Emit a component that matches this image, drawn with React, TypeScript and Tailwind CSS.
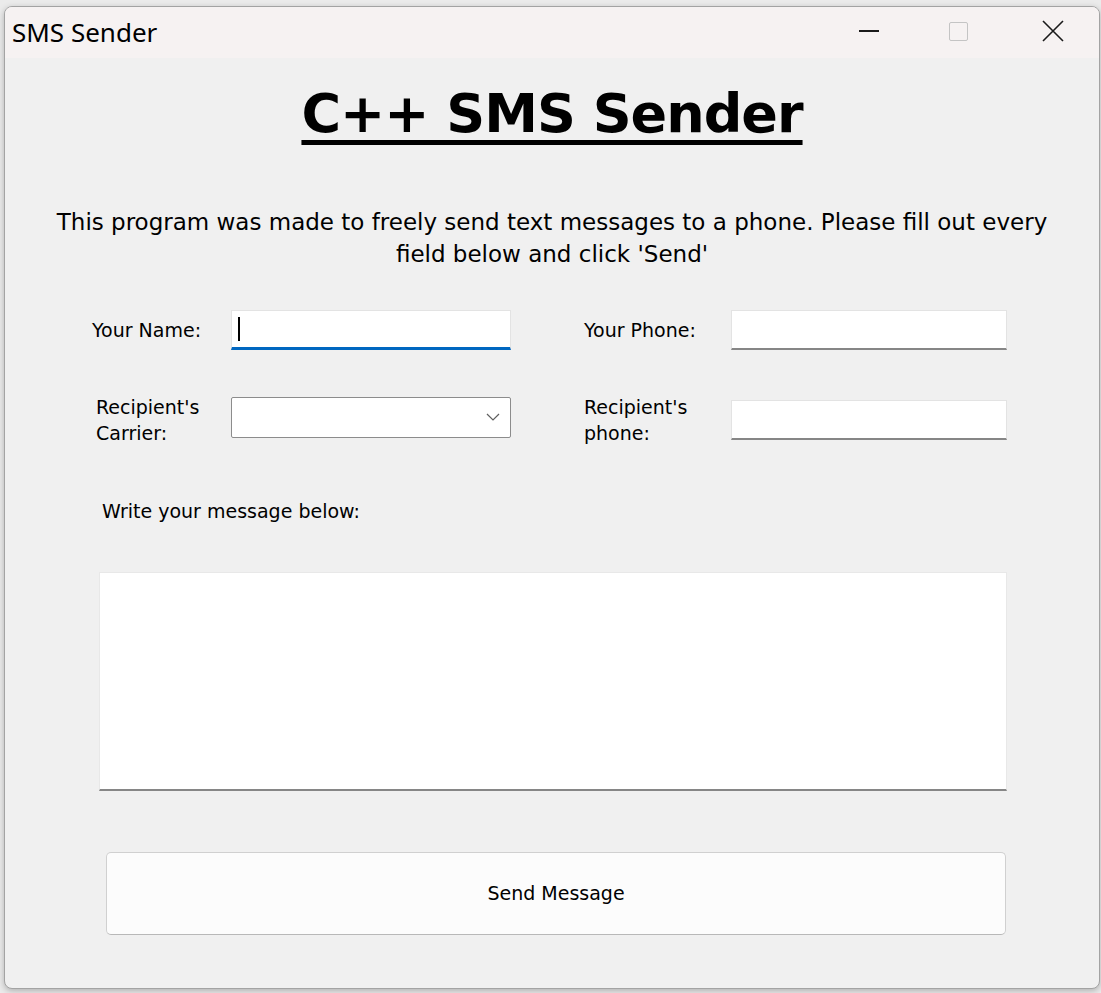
import React, { useState } from "react";

const App = () => {
  const [name, setName] = useState("");
  const [phone, setPhone] = useState("");
  const [carrier, setCarrier] = useState("");
  const [toPhone, setToPhone] = useState("");
  const [message, setMessage] = useState("");

  const tahoma = { fontFamily: '"DejaVu Sans", Verdana, sans-serif' };

  return (
    <div className="w-[1101px] h-[993px] bg-[#ebebeb] pt-[6px] pl-[4px] overflow-hidden">
      <div className="w-[1096px] h-[983px] bg-[#f0f0f0] border border-[#a3a3a3] rounded-[8px] overflow-hidden flex flex-col shadow-[0_2px_6px_rgba(0,0,0,0.25)]">
        {/* title bar */}
        <div className="h-[51px] shrink-0 bg-[#f6f2f2] flex items-center pl-[7px]">
          <span
            className="text-[26px] text-black leading-none -mt-[2px]"
            style={{ fontFamily: '"Noto Sans", "Open Sans", sans-serif' }}
          >
            SMS Sender
          </span>
          <div className="ml-auto flex items-center h-full -mt-[3px]">
            <div className="w-[92px] h-full flex items-center justify-center">
              <div className="w-[20px] h-[1.5px] bg-[#1a1a1a]" />
            </div>
            <div className="w-[92px] h-full flex items-center justify-center pr-[6px]">
              <div className="w-[19px] h-[19px] border border-[#c4c4c4] rounded-[2px]" />
            </div>
            <div className="w-[92px] h-full flex items-center justify-center">
              <svg width="22" height="22" viewBox="0 0 22 22">
                <path d="M1 1 L21 21 M21 1 L1 21" stroke="#1a1a1a" strokeWidth="1.6" />
              </svg>
            </div>
          </div>
        </div>

        {/* body */}
        <div className="flex-1 flex flex-col" style={tahoma}>
          <h1 className="mt-[24px] text-center text-[54px] tracking-[-1px] font-bold leading-[64px] text-black underline decoration-[5px] underline-offset-[8px]">
            C++ SMS Sender
          </h1>

          <p className="mt-[60px] px-[40px] text-center text-[23px] leading-[32px] text-black">
            This program was made to freely send text messages to a phone. Please fill out every field below and click 'Send'
          </p>

          {/* row 1 */}
          <div className="mt-[40px] flex items-center h-[40px] text-[19px] text-black">
            <label className="pl-[87px] w-[226px]">Your Name:</label>
            <div className="relative w-[280px] h-[40px] bg-white border border-[#e3e3e3] border-b-[3px] border-b-[#0067c0] flex items-center px-[6px]">
              <input
                autoFocus
                value={name}
                onChange={(e) => setName(e.target.value)}
                className="w-full outline-none bg-transparent text-[19px] caret-black"
              />
              {name === "" && (
                <span className="absolute left-[6px] top-[6px] w-[2px] h-[24px] bg-black pointer-events-none" />
              )}
            </div>
            <label className="ml-[73px] w-[147px]">Your Phone:</label>
            <input
              value={phone}
              onChange={(e) => setPhone(e.target.value)}
              className="w-[276px] h-[40px] bg-white border border-[#e3e3e3] border-b-2 border-b-[#868686] outline-none px-[6px] text-[19px]"
            />
          </div>

          {/* row 2 */}
          <div className="mt-[48px] flex items-center h-[44px] text-[19px] text-black leading-[26px]">
            <label className="pl-[91px] w-[226px]">
              Recipient's
              <br />
              Carrier:
            </label>
            <div className="relative w-[280px] h-[41px] bg-white border border-[#8c8c8c] rounded-[2px] -mt-[5px]">
              <select
                value={carrier}
                onChange={(e) => setCarrier(e.target.value)}
                className="appearance-none w-full h-full bg-transparent outline-none px-[6px] text-[19px]"
              >
                <option value=""></option>
                <option value="att">AT&T</option>
                <option value="verizon">Verizon</option>
                <option value="tmobile">T-Mobile</option>
              </select>
              <svg
                className="absolute right-[10px] top-[15px] pointer-events-none"
                width="14"
                height="9"
                viewBox="0 0 14 9"
              >
                <path d="M1 1 L7 7 L13 1" fill="none" stroke="#5f5f5f" strokeWidth="1.2" />
              </svg>
            </div>
            <label className="ml-[73px] w-[147px]">
              Recipient's
              <br />
              phone:
            </label>
            <input
              value={toPhone}
              onChange={(e) => setToPhone(e.target.value)}
              className="w-[276px] h-[40px] bg-white border border-[#e3e3e3] border-b-2 border-b-[#868686] outline-none px-[6px] text-[19px]"
            />
          </div>

          <div className="mt-[55px] pl-[97px] text-[19px] text-black">Write your message below:</div>

          <textarea
            value={message}
            onChange={(e) => setMessage(e.target.value)}
            className="mt-[46px] ml-[94px] w-[908px] h-[219px] bg-white border border-[#e8e8e8] border-b-2 border-b-[#868686] outline-none resize-none p-[6px] text-[19px]"
          />

          <button className="mt-[61px] ml-[101px] w-[900px] h-[83px] bg-[#fcfcfc] border border-[#d0d0d0] border-b-[#b8b8b8] rounded-[5px] text-[19px] text-black">
            Send Message
          </button>
        </div>
      </div>
    </div>
  );
};

export default App;
